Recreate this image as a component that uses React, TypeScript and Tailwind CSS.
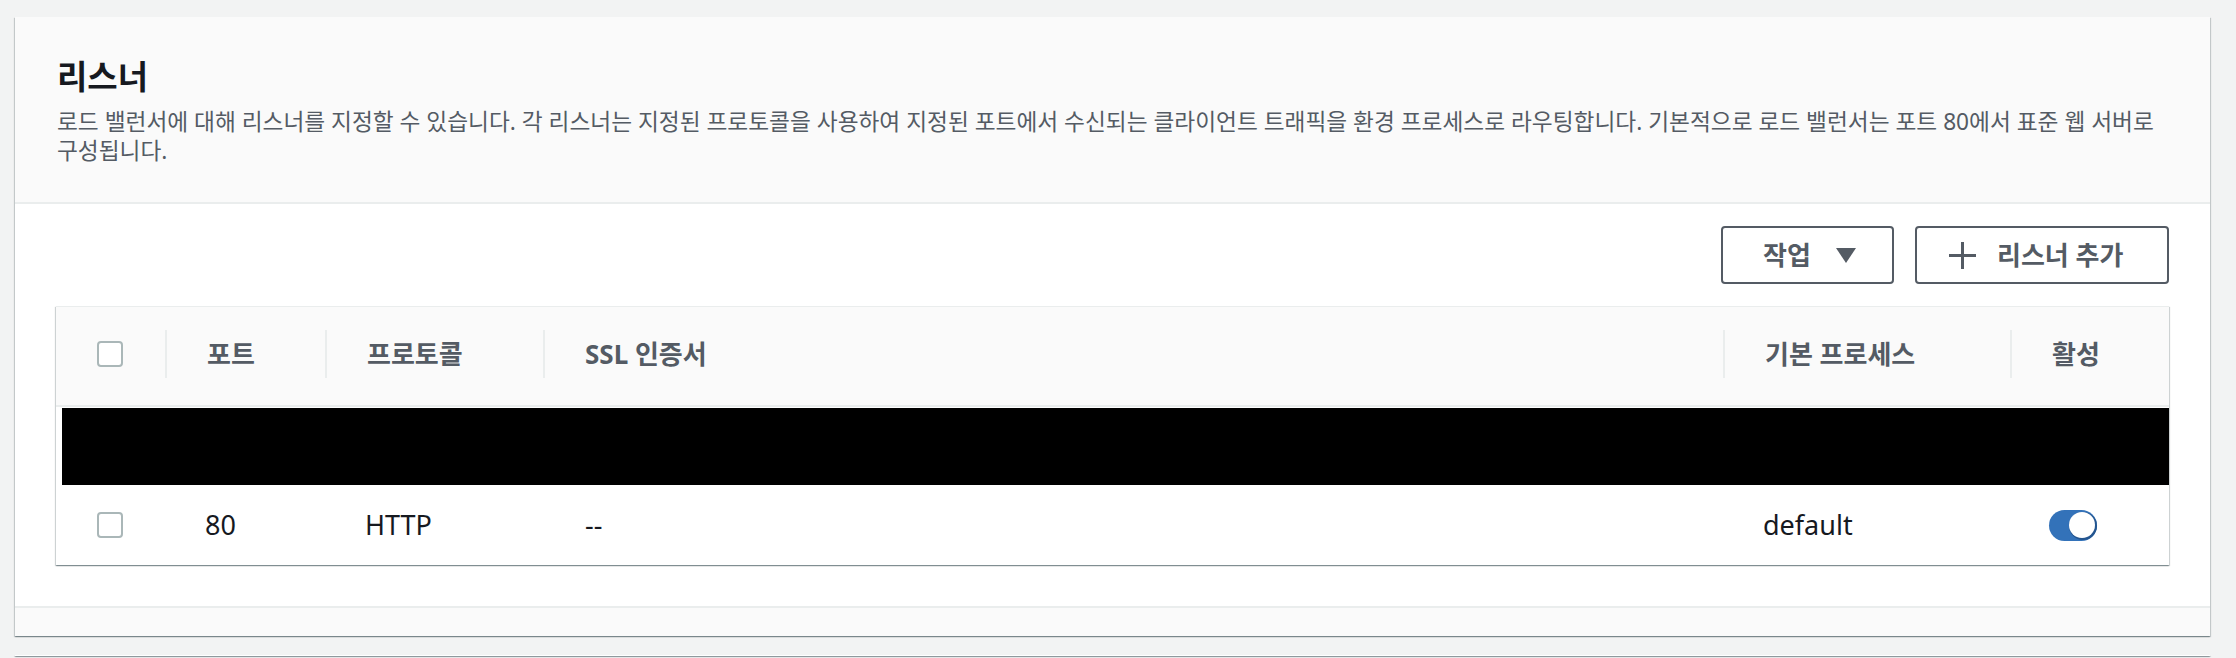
const shadow = 'shadow-[0_1px_1px_0_rgba(0,28,36,0.3),1px_1px_1px_0_rgba(0,28,36,0.15),-1px_1px_1px_0_rgba(0,28,36,0.15)]';

function Checkbox() {
  return <div className="h-[26px] w-[26px] rounded-[4px] border-2 border-[#aab7b8] bg-white" />;
}

function Toggle() {
  return (
    <div className="relative h-[31px] w-[48px] rounded-full bg-[#3372b9]">
      <div className="absolute right-[2px] top-[2.5px] h-[26px] w-[26px] rounded-full bg-white shadow-[1px_1px_0_1px_#24558f]" />
    </div>
  );
}

function HeadCell({ label }: { label: string }) {
  return (
    <div className="flex items-center">
      <div className="h-[48px] w-[2px] bg-[#eaeded]" />
      <span className="pl-[40px] text-[26px] font-bold text-[#545b64]">{label}</span>
    </div>
  );
}

export default function App() {
  return (
    <div className="min-h-screen bg-[#f2f3f3] pl-[15px] pr-[26px] pt-[17px] font-[family-name:'Noto_Sans','Noto_Sans_CJK_KR',sans-serif]">
      <section className={`bg-white ${shadow}`}>
        {/* Header */}
        <div className="border-b-2 border-[#eaeded] bg-[#fafafa] px-[42px] pb-[37px] pt-[42px]">
          <h2 className="text-[33px] font-bold leading-[36px] text-[#16191f]">리스너</h2>
          <p className="mt-[12px] break-keep text-[22.7px] leading-[29px] text-[#545b64]">
            로드 밸런서에 대해 리스너를 지정할 수 있습니다. 각 리스너는 지정된 프로토콜을 사용하여 지정된 포트에서 수신되는 클라이언트 트래픽을 환경 프로세스로 라우팅합니다. 기본적으로 로드 밸런서는 포트 80에서 표준 웹 서버로 구성됩니다.
          </p>
        </div>

        {/* Body */}
        <div className="px-[41px] pb-[41px] pt-[22px]">
          <div className="flex justify-end gap-[21px]">
            <button className="flex h-[58px] w-[173px] items-center rounded-[4px] border-2 border-[#545b64] pl-[40px] text-[26px] font-bold text-[#545b64]">
              작업
              <svg className="ml-[25px]" width="20" height="15" viewBox="0 0 20 15">
                <path d="M0 0H20L10 15Z" fill="#545b64" />
              </svg>
            </button>
            <button className="flex h-[58px] w-[254px] items-center rounded-[4px] border-2 border-[#545b64] pl-[32px] text-[26px] font-bold text-[#545b64]">
              <svg width="27" height="27" viewBox="0 0 27 27">
                <path d="M13.5 0V27M0 13.5H27" stroke="#545b64" strokeWidth="3" />
              </svg>
              <span className="ml-[21px]">리스너 추가</span>
            </button>
          </div>

          <div className={`mt-[22px] border-t border-[#eaeded] bg-white ${shadow}`}>
            <div className="grid h-[100px] grid-cols-[109px_160px_218px_1fr_287px_159px] border-b-2 border-[#eaeded] bg-[#fafafa] pb-[4px]">
              <div className="flex items-center pl-[41px]">
                <Checkbox />
              </div>
              <HeadCell label="포트" />
              <HeadCell label="프로토콜" />
              <HeadCell label="SSL 인증서" />
              <HeadCell label="기본 프로세스" />
              <HeadCell label="활성" />
            </div>

            <div className="ml-[6px] mt-[1px] h-[77px] bg-black" />

            <div className="grid h-[80px] grid-cols-[109px_160px_218px_1fr_287px_159px] items-center text-[27px] text-[#16191f]">
              <div className="pl-[41px]">
                <Checkbox />
              </div>
              <div className="pl-[40px]">80</div>
              <div className="pl-[40px]">HTTP</div>
              <div className="pl-[42px]">--</div>
              <div className="pl-[40px]">default</div>
              <div className="pl-[39px]">
                <Toggle />
              </div>
            </div>
          </div>
        </div>

        {/* Footer */}
        <div className="h-[30px] border-t-2 border-[#eaeded] bg-[#fafafa]" />
      </section>

      <div className={`mt-[19px] h-[1px] bg-white ${shadow}`} />
    </div>
  );
}
